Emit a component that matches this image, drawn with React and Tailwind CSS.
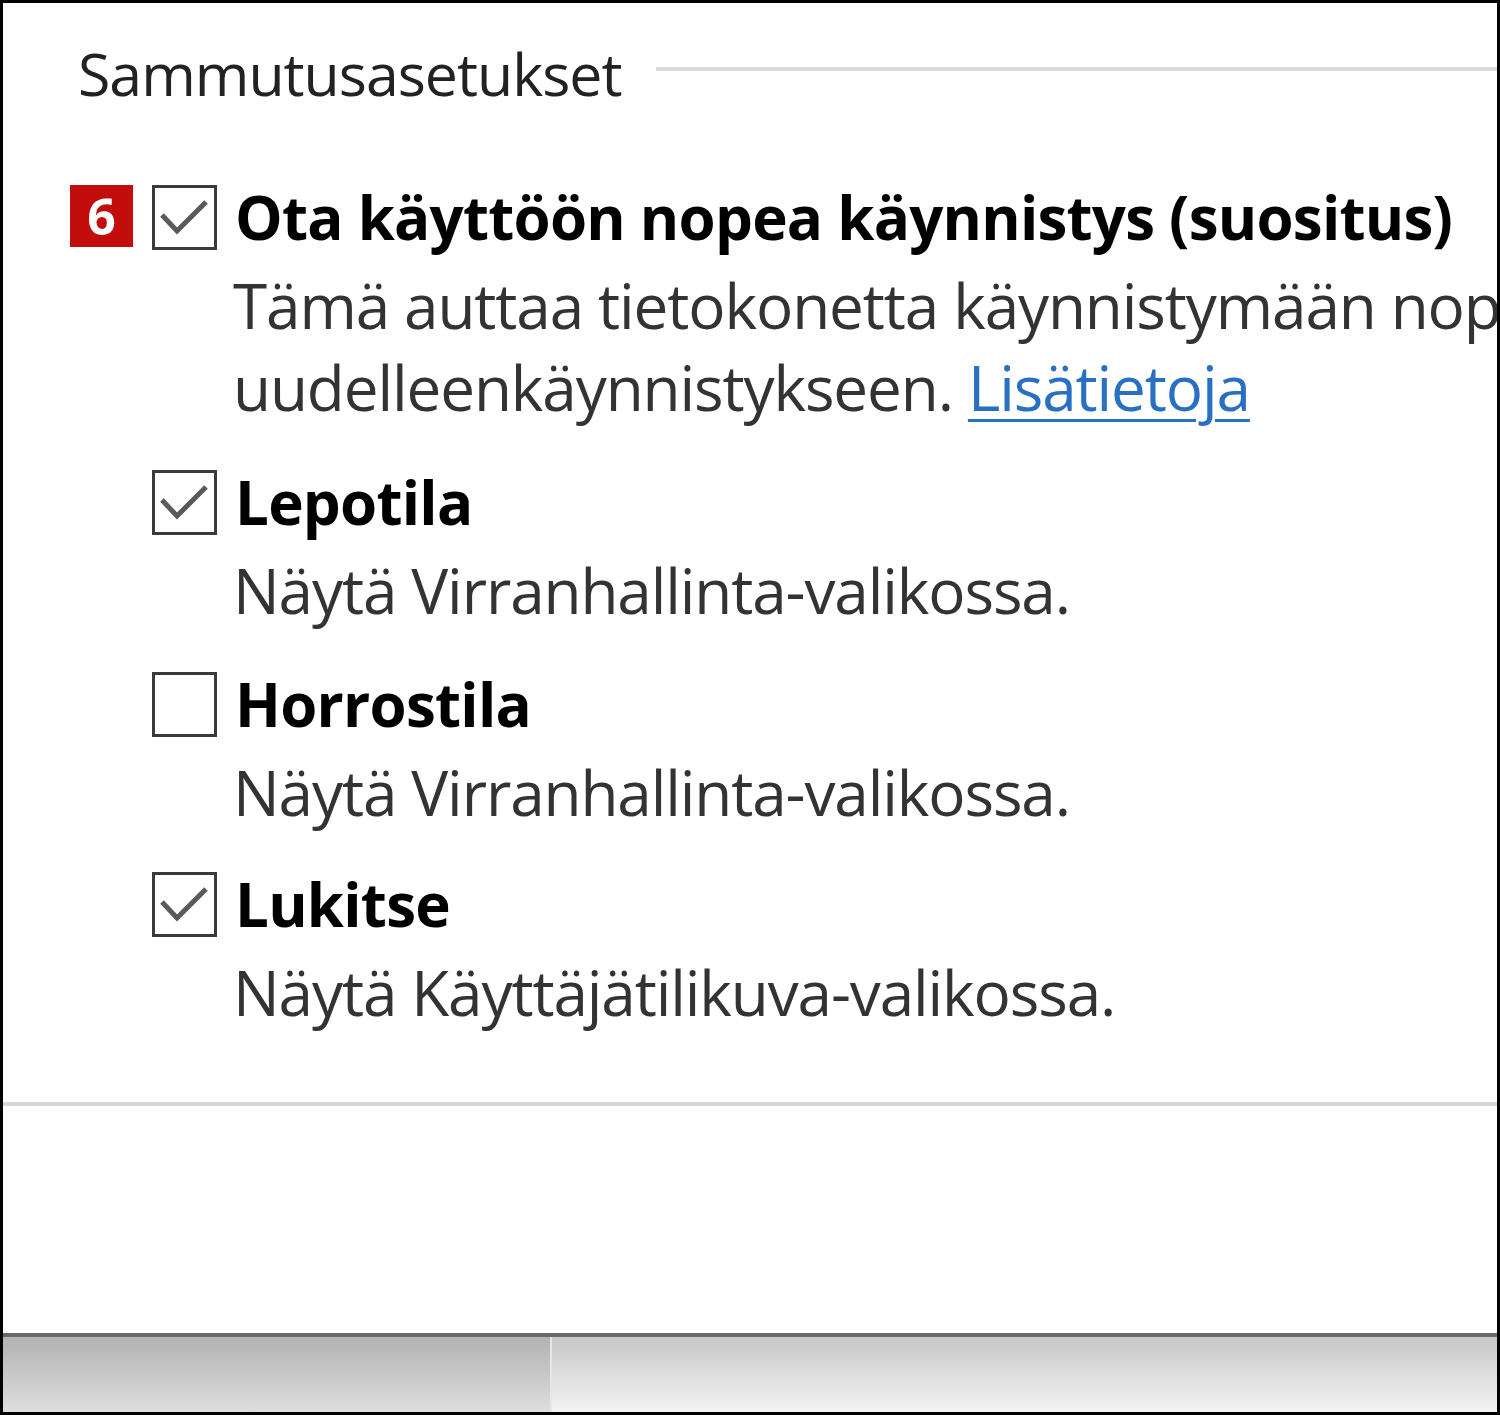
function Checkbox({ checked }) {
  return (
    <div className="relative h-[65px] w-[65px] shrink-0 border-[3px] border-[#3a3a3a] bg-white">
      {checked && (
        <svg viewBox="0 0 59 59" className="absolute left-0 top-0 h-[59px] w-[59px]">
          <path d="M7 27 L22 43 L51 14" fill="none" stroke="#5a5a5a" strokeWidth="5" />
        </svg>
      )}
    </div>
  );
}

function Option({ badge, checked, title, lines, className }) {
  return (
    <div className={"flex pl-[67px] " + className}>
      <div className="mr-[19px] w-[63px] shrink-0">
        {badge && (
          <div className="flex h-[62px] w-[63px] items-center justify-center bg-[#c30d0d] text-[50px] font-bold leading-none text-white">
            {badge}
          </div>
        )}
      </div>
      <div className="min-w-0 flex-1">
        <div className="flex items-center gap-[18px]">
          <Checkbox checked={checked} />
          <span className="whitespace-nowrap text-[60px] font-bold leading-[65px] tracking-[-0.75px] text-black">
            {title}
          </span>
        </div>
        <div className="mt-[14px] pl-[81px] text-[62px] leading-[82px] tracking-[-1.1px] text-[#333]">
          {lines.map((line, i) => (
            <div key={i} className="whitespace-nowrap">
              {line}
            </div>
          ))}
        </div>
      </div>
    </div>
  );
}

export default function App() {
  return (
    <div
      className="flex h-[1415px] w-[1500px] flex-col overflow-hidden border-[3px] border-black bg-white"
      style={{ fontFamily: '"Open Sans", "Noto Sans", sans-serif' }}
    >
      <div className="mt-[29px] flex h-[82px] items-center pl-[75px]">
        <span className="whitespace-nowrap text-[59px] leading-[82px] tracking-[-1px] text-[#222]">
          Sammutusasetukset
        </span>
        <div className="mb-[8px] ml-[35px] h-[4px] flex-1 bg-[#dadada]" />
      </div>

      <Option
        className="mt-[71px]"
        badge="6"
        checked
        title="Ota käyttöön nopea käynnistys (suositus)"
        lines={[
          "Tämä auttaa tietokonetta käynnistymään nopeammin sammutuksen jälkeen. Tämä ei vaikuta",
          <>
            uudelleenkäynnistykseen.{" "}
            <a className="text-[#2a70c2] underline decoration-[3px] underline-offset-[8px]">Lisätietoja</a>
          </>,
        ]}
      />
      <Option className="mt-[42px]" checked title="Lepotila" lines={["Näytä Virranhallinta-valikossa."]} />
      <Option className="mt-[41px]" title="Horrostila" lines={["Näytä Virranhallinta-valikossa."]} />
      <Option className="mt-[39px]" checked title="Lukitse" lines={["Näytä Käyttäjätilikuva-valikossa."]} />

      <div className="mt-[69px] h-[4px] bg-[#d6d6d6]" />
      <div className="flex-1" />

      <div className="h-[4px] bg-[#6a6a6a]" />
      <div className="flex h-[75px]">
        <div className="w-[549px] border-r-2 border-[#e6e6e6] bg-gradient-to-b from-[#b2b2b2] to-[#dedede]" />
        <div className="flex-1 bg-gradient-to-b from-[#c7c7c7] to-[#f4f4f4]" />
      </div>
    </div>
  );
}
